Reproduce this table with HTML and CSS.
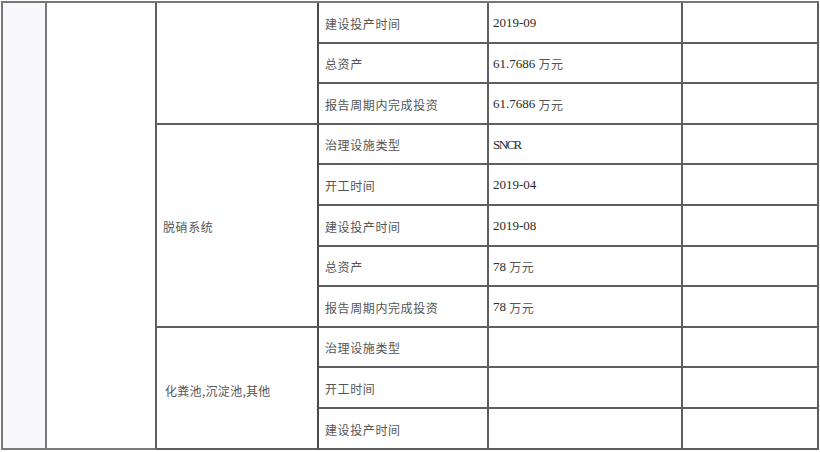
FILE: index.html
```html
<!DOCTYPE html>
<html lang="zh-CN">
<head>
<meta charset="utf-8">
<title>治理设施</title>
<link rel="stylesheet" href="styles.css">
</head>
<body>
<div class="sheet">
  <div class="cell side r-all"></div>
  <div class="cell c2 r-all"></div>
  <div class="cell c3 r-g1"></div>
  <div class="cell lbl">建设投产时间</div>
  <div class="cell val">2019-09</div>
  <div class="cell blank"></div>
  <div class="cell lbl">总资产</div>
  <div class="cell val">61.7686 <span class="cjk">万元</span></div>
  <div class="cell blank"></div>
  <div class="cell lbl">报告周期内完成投资</div>
  <div class="cell val">61.7686 <span class="cjk">万元</span></div>
  <div class="cell blank"></div>

  <div class="cell c3 r-g2 grp">脱硝系统</div>
  <div class="cell lbl">治理设施类型</div>
  <div class="cell val sncr">SNCR</div>
  <div class="cell blank"></div>
  <div class="cell lbl">开工时间</div>
  <div class="cell val">2019-04</div>
  <div class="cell blank"></div>
  <div class="cell lbl">建设投产时间</div>
  <div class="cell val">2019-08</div>
  <div class="cell blank"></div>
  <div class="cell lbl">总资产</div>
  <div class="cell val">78 <span class="cjk">万元</span></div>
  <div class="cell blank"></div>
  <div class="cell lbl">报告周期内完成投资</div>
  <div class="cell val">78 <span class="cjk">万元</span></div>
  <div class="cell blank"></div>

  <div class="cell c3 r-g3 grp grp2">化粪池,沉淀池,其他</div>
  <div class="cell lbl">治理设施类型</div>
  <div class="cell val"></div>
  <div class="cell blank"></div>
  <div class="cell lbl">开工时间</div>
  <div class="cell val"></div>
  <div class="cell blank"></div>
  <div class="cell lbl">建设投产时间</div>
  <div class="cell val"></div>
  <div class="cell blank"></div>
</div>
</body>
</html>
```

FILE: styles.css
```css
html, body {
  margin: 0;
  padding: 0;
  background: #ffffff;
}

body {
  font-family: "Liberation Serif", "Noto Sans CJK SC", serif;
  color: #3a3a3a;
}

.sheet {
  margin: 1px 0 0 1px;
  display: grid;
  grid-template-columns: 44px 110px 162px 170px 194px 136px;
  grid-template-rows: 41px 40px 41px 40px 41px 41px 40px 41px 40px 41px 41px;
  border-left: 2px solid #777777;
  border-top: 2px solid #777777;
  width: max-content;
}

.cell {
  box-sizing: border-box;
  border-right: 2px solid #5e5e5e;
  border-bottom: 2px solid #5e5e5e;
  display: flex;
  align-items: center;
  min-width: 0;
}

.side {
  grid-column: 1;
  background: #f7f7fc;
  border-right-color: #7a7a7a;
  border-bottom-color: #7a7a7a;
}

.c2 {
  grid-column: 2;
  border-bottom-color: #7a7a7a;
}

.r-all { grid-row: 1 / span 11; }
.r-g1 { grid-row: 1 / span 3; }
.r-g2 { grid-row: 4 / span 5; }
.r-g3 { grid-row: 9 / span 3; }

.c3 {
  grid-column: 3;
  border-right-color: #4a4a4a;
}

.grp {
  padding-left: 6px;
  padding-top: 2px;
  font-family: "Noto Sans CJK SC", sans-serif;
  font-size: 12px;
  letter-spacing: 0.6px;
  color: #555555;
}

.grp2 {
  padding-left: 8px;
  padding-top: 4px;
  letter-spacing: 0.3px;
}

.lbl {
  grid-column: 4;
  padding-left: 6px;
  padding-top: 1px;
  font-family: "Noto Sans CJK SC", sans-serif;
  font-size: 12px;
  letter-spacing: 0.6px;
  color: #555555;
}

.val {
  grid-column: 5;
  padding-left: 4px;
  padding-top: 1px;
  font-size: 13px;
  color: #2a2a2a;
  white-space: pre;
}

.cjk {
  font-family: "Noto Sans CJK SC", sans-serif;
  font-size: 12px;
  letter-spacing: 0.6px;
  color: #555555;
}

.sncr {
  letter-spacing: -1.6px;
}

.blank {
  grid-column: 6;
}
```
